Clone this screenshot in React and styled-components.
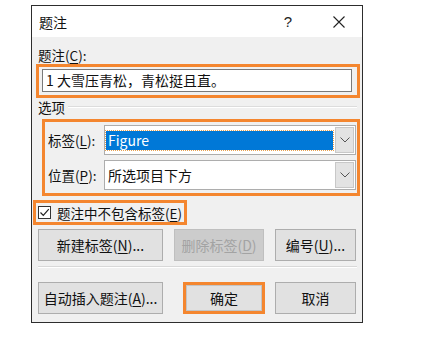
import styled, { createGlobalStyle } from "styled-components";

const GlobalStyle = createGlobalStyle`
  body {
    margin: 0;
    background: #fff;
    font-family: "Noto Sans CJK SC", "Noto Sans", sans-serif;
    color: #111;
  }
`;

const ORANGE = "#f4862f";

export default function App() {
  return (
    <Page>
      <GlobalStyle />
      <Dialog>
        <TitleBar>
          <Title>题注</Title>
          <Help>?</Help>
          <Close>
            <svg width="12" height="12" viewBox="0 0 12 12">
              <path d="M0.5 0.5 L11.5 11.5 M11.5 0.5 L0.5 11.5" stroke="#222" strokeWidth="1.1" fill="none" />
            </svg>
          </Close>
        </TitleBar>

        <Body>
          <Label>题注(<Key>C</Key>):</Label>
          <CaptionMark>
            <TextField>1 大雪压青松，青松挺且直。</TextField>
          </CaptionMark>

          <GroupHeader>
            <span>选项</span>
            <Rule />
          </GroupHeader>

          <OptionsMark>
            <FieldRow>
              <FieldLabel>标签(<Key>L</Key>):</FieldLabel>
              <Combo>
                <ComboValue $selected>Figure</ComboValue>
                <DropButton><Chevron /></DropButton>
              </Combo>
            </FieldRow>
            <FieldRow>
              <FieldLabel>位置(<Key>P</Key>):</FieldLabel>
              <Combo>
                <ComboValue>所选项目下方</ComboValue>
                <DropButton><Chevron /></DropButton>
              </Combo>
            </FieldRow>
          </OptionsMark>

          <CheckMark>
            <CheckBox>
              <svg width="11" height="11" viewBox="0 0 11 11">
                <path d="M1.5 5.5 L4.3 8.3 L9.8 2.2" stroke="#222" strokeWidth="1.2" fill="none" />
              </svg>
            </CheckBox>
            <CheckLabel>题注中不包含标签(<Key>E</Key>)</CheckLabel>
          </CheckMark>

          <ButtonRow>
            <Button $w={125}>新建标签(<Key>N</Key>)...</Button>
            <Button $w={90} $gap={11} disabled>删除标签(<Key>D</Key>)</Button>
            <Button $w={81} $gap={11}>编号(<Key>U</Key>)...</Button>
          </ButtonRow>

          <Separator />

          <ButtonRow $top={14}>
            <Button $w={125}>自动插入题注(<Key>A</Key>)...</Button>
            <OkMark>
              <OkButton>确定</OkButton>
            </OkMark>
            <Button $w={81} $gap={10}>取消</Button>
          </ButtonRow>
        </Body>
      </Dialog>
    </Page>
  );
}

function Chevron() {
  return (
    <svg width="10" height="6" viewBox="0 0 10 6">
      <path d="M0.5 0.5 L5 5 L9.5 0.5" stroke="#555" strokeWidth="1" fill="none" />
    </svg>
  );
}

const Page = styled.div`
  padding: 5px 0 0 31px;
`;

const Dialog = styled.div`
  width: 330px;
  border: 1px solid #2d2d2d;
  background: #f0f0f0;
`;

const TitleBar = styled.div`
  height: 31px;
  background: #fff;
  display: flex;
  align-items: center;
  padding: 0 8px 0 7px;
`;

const Title = styled.div`
  flex: 1;
  font-size: 14px;
  line-height: 16px;
`;

const Help = styled.div`
  width: 20px;
  text-align: center;
  font-size: 15px;
  font-family: "Liberation Sans", sans-serif;
  color: #222;
  margin-right: 26px;
`;

const Close = styled.div`
  width: 30px;
  display: flex;
  justify-content: center;
  align-items: center;
`;

const Body = styled.div`
  padding: 10px 6px 8px 6px;
  display: flex;
  flex-direction: column;
`;

const Key = styled.span`
  text-decoration: underline;
  text-underline-offset: 2px;
`;

const Label = styled.div`
  font-size: 13.5px;
  line-height: 16px;
`;

const CaptionMark = styled.div`
  margin: 1px -4px 0 -2px;
  border: 3px solid ${ORANGE};
  padding: 2px 5px 3px 3px;
`;

const TextField = styled.div`
  height: 23px;
  box-sizing: border-box;
  border: 1px solid #7a7a7a;
  background: #fff;
  padding-left: 3px;
  font-size: 14px;
  line-height: 21px;
  color: #111;
`;

const GroupHeader = styled.div`
  margin-top: 1px;
  height: 16px;
  display: flex;
  align-items: center;
  gap: 3px;
  font-size: 13.5px;
  line-height: 16px;
  margin-right: -1px;
`;

const Rule = styled.div`
  flex: 1;
  height: 1px;
  background: #dcdcdc;
  border-bottom: 1px solid #fff;
`;

const OptionsMark = styled.div`
  margin: 4px -4px 0 4px;
  border: 3px solid ${ORANGE};
  padding: 3px 1px 3px 3px;
  display: flex;
  flex-direction: column;
  gap: 5px;
`;

const FieldRow = styled.div`
  display: flex;
  align-items: center;
  height: 30px;
`;

const FieldLabel = styled.div`
  width: 56px;
  font-size: 13.5px;
  line-height: 16px;
`;

const Combo = styled.div`
  flex: 1;
  height: 30px;
  box-sizing: border-box;
  border: 1px solid #adadad;
  background: #fff;
  display: flex;
  align-items: center;
  padding: 1px;
`;

const ComboValue = styled.div`
  flex: 1;
  height: 19px;
  margin-right: 2px;
  padding-left: 2px;
  font-size: 14px;
  line-height: 19px;
  background: ${(p) => (p.$selected ? "#0078d7" : "transparent")};
  color: ${(p) => (p.$selected ? "#fff" : "#111")};
  outline: ${(p) => (p.$selected ? "1px dotted #e8a050" : "none")};
`;

const DropButton = styled.div`
  width: 17px;
  align-self: stretch;
  background: #e3e3e3;
  border: 1px solid #c8c8c8;
  display: flex;
  align-items: center;
  justify-content: center;
`;

const CheckMark = styled.div`
  align-self: flex-start;
  margin: 4px 0 0 -5px;
  height: 25px;
  box-sizing: border-box;
  border: 3px solid ${ORANGE};
  padding: 0 2px;
  display: flex;
  align-items: center;
`;

const CheckBox = styled.div`
  width: 13px;
  height: 13px;
  box-sizing: border-box;
  border: 1px solid #333;
  background: #fff;
  display: flex;
  align-items: center;
  justify-content: center;
`;

const CheckLabel = styled.div`
  margin-left: 6px;
  font-size: 13.5px;
  line-height: 16px;
`;

const ButtonRow = styled.div`
  margin-top: ${(p) => p.$top ?? 4}px;
  display: flex;
  align-items: center;
`;

const Button = styled.button`
  width: ${(p) => p.$w}px;
  margin-left: ${(p) => p.$gap ?? 0}px;
  height: 32px;
  box-sizing: border-box;
  border: 1px solid #adadad;
  background: #e1e1e1;
  font-family: inherit;
  font-size: 14px;
  color: #111;
  padding: 0;
  white-space: nowrap;

  &:disabled {
    background: #cccccc;
    border-color: #bfbfbf;
    color: #a3a3a3;
  }
`;

const Separator = styled.div`
  margin-top: 5px;
  height: 1px;
  background: #d8d8d8;
  border-bottom: 1px solid #fff;
  margin-right: -1px;
`;

const OkMark = styled.div`
  margin-left: 20px;
  width: 82px;
  height: 32px;
  box-sizing: border-box;
  border: 3px solid ${ORANGE};
  display: flex;
`;

const OkButton = styled.button`
  flex: 1;
  border: 1px solid #c4c4c4;
  background: #e1e1e1;
  font-family: inherit;
  font-size: 14px;
  color: #111;
  padding: 0;
`;
